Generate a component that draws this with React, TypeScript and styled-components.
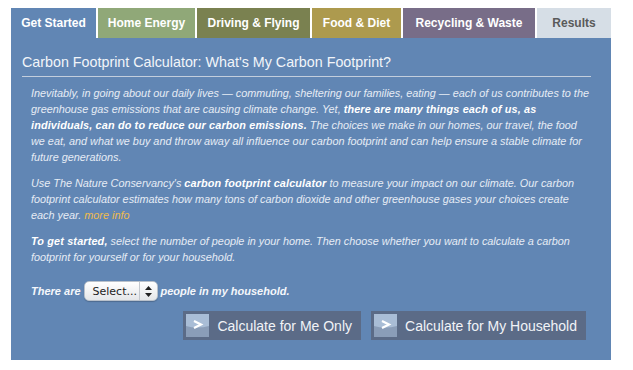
import styled, { createGlobalStyle } from 'styled-components';

const GlobalStyle = createGlobalStyle`
  body {
    margin: 0;
    background: #ffffff;
    font-family: 'Liberation Sans', Arial, sans-serif;
  }
`;

const tabs = [
  { label: 'Get Started', bg: '#6186b4', color: '#ffffff', width: 85 },
  { label: 'Home Energy', bg: '#90a878', color: '#ffffff', width: 97 },
  { label: 'Driving & Flying', bg: '#7a8150', color: '#ffffff', width: 113 },
  { label: 'Food & Diet', bg: '#ad9a4e', color: '#ffffff', width: 89 },
  { label: 'Recycling & Waste', bg: '#786d88', color: '#ffffff', width: 132 },
  { label: 'Results', bg: '#d6dee6', color: '#5a5a5a', width: 0 },
];

const ArrowIcon = () => (
  <IconBox>
    <svg width="23" height="23" viewBox="0 0 23 23">
      <rect x="0" y="0" width="23" height="23" fill="#a9bdd6" />
      <path d="M0 12 Q11 15 23 12 L23 23 L0 23 Z" fill="#8a9db8" />
      <path d="M8 7 L15 10.5 L8 14" stroke="#ffffff" strokeWidth="2.2" fill="none" />
    </svg>
  </IconBox>
);

const App = () => {
  return (
    <Page>
      <GlobalStyle />
      <TabBar>
        {tabs.map((tab) => (
          <Tab key={tab.label} $bg={tab.bg} $color={tab.color} $width={tab.width}>
            {tab.label}
          </Tab>
        ))}
      </TabBar>
      <Panel>
        <Title>Carbon Footprint Calculator: What's My Carbon Footprint?</Title>
        <Body>
          <Paragraph>
            Inevitably, in going about our daily lives — commuting, sheltering our families, eating — each of us
            contributes to the greenhouse gas emissions that are causing climate change. Yet,{' '}
            <strong>there are many things each of us, as individuals, can do to reduce our carbon emissions.</strong>{' '}
            The choices we make in our homes, our travel, the food we eat, and what we buy and throw away all influence
            our carbon footprint and can help ensure a stable climate for future generations.
          </Paragraph>
          <Paragraph>
            Use The Nature Conservancy's <strong>carbon footprint calculator</strong> to measure your impact on our
            climate. Our carbon footprint calculator estimates how many tons of carbon dioxide and other greenhouse
            gases your choices create each year. <MoreLink href="#">more info</MoreLink>
          </Paragraph>
          <Paragraph>
            <strong>To get started,</strong> select the number of people in your home. Then choose whether you want to
            calculate a carbon footprint for yourself or for your household.
          </Paragraph>
          <HouseholdRow>
            <span>There are</span>
            <SelectBox>
              <SelectText>Select...</SelectText>
              <SelectArrows>
                <svg width="7" height="11" viewBox="0 0 7 11">
                  <path d="M3.5 0 L7 4 L0 4 Z" fill="#222" />
                  <path d="M3.5 11 L7 7 L0 7 Z" fill="#222" />
                </svg>
              </SelectArrows>
            </SelectBox>
            <span>people in my household.</span>
          </HouseholdRow>
          <Actions>
            <ActionButton>
              <ArrowIcon />
              Calculate for Me Only
            </ActionButton>
            <ActionButton>
              <ArrowIcon />
              Calculate for My Household
            </ActionButton>
          </Actions>
        </Body>
      </Panel>
    </Page>
  );
};

const Page = styled.div`
  width: 600px;
  padding: 8px 0 0 11px;
`;

const TabBar = styled.div`
  display: flex;
  gap: 2px;
  height: 30px;
`;

const Tab = styled.div<{ $bg: string; $color: string; $width: number }>`
  display: flex;
  align-items: center;
  justify-content: center;
  flex: ${({ $width }) => ($width ? `0 0 ${$width}px` : '1 1 auto')};

  background: ${({ $bg }) => $bg};
  color: ${({ $color }) => $color};
  font-size: 12px;
  font-weight: 700;
  white-space: nowrap;
`;

const Panel = styled.div`
  height: 322px;
  padding: 16px 20px 0 11px;
  box-sizing: border-box;

  background: #6186b4;
`;

const Title = styled.h1`
  margin: 0;
  padding-bottom: 6px;
  border-bottom: 1px solid #c3cedd;

  color: #f2f5f9;
  font-size: 14.3px;
  font-weight: 400;
  line-height: 16px;
`;

const Body = styled.div`
  display: flex;
  flex-direction: column;
  padding: 8px 0 0 9px;
`;

const Paragraph = styled.p`
  margin: 0 0 10px;

  color: #e6ecf4;
  font-size: 10.85px;
  font-style: italic;
  line-height: 16px;

  strong {
    color: #ffffff;
    font-weight: 700;
    letter-spacing: 0.15px;
  }
`;

const MoreLink = styled.a`
  color: #f0bb4c;
  text-decoration: none;
`;

const HouseholdRow = styled.div`
  display: flex;
  align-items: center;
  gap: 3px;
  margin-top: 6px;

  color: #f4f7fb;
  font-size: 11px;
  font-style: italic;
  font-weight: 700;
`;

const SelectBox = styled.div`
  display: flex;
  align-items: center;
  width: 74px;
  height: 20px;
  box-sizing: border-box;

  border: 1px solid #b9c1cb;
  border-radius: 5px;
  background: linear-gradient(#ffffff, #e4e6e9);
  box-shadow: 0 1px 1px rgba(0, 0, 0, 0.2);
`;

const SelectText = styled.span`
  flex: 1;
  padding-left: 8px;

  color: #222222;
  font-family: 'DejaVu Sans', sans-serif;
  font-size: 11px;
  font-style: normal;
  font-weight: 400;
`;

const SelectArrows = styled.span`
  display: flex;
  align-items: center;
  justify-content: center;
  width: 17px;
  height: 100%;

  border-left: 1px solid #c4c8ce;
`;

const Actions = styled.div`
  display: flex;
  justify-content: flex-end;
  gap: 10px;
  margin-top: 10px;
  padding-right: 5px;
`;

const ActionButton = styled.button`
  display: flex;
  align-items: center;
  gap: 8px;
  height: 29px;
  padding: 0 9px 0 3px;

  border: none;
  background: #5b6b87;
  color: #f1f3f7;
  font-family: 'Liberation Sans', Arial, sans-serif;
  font-size: 14px;
  cursor: pointer;
`;

const IconBox = styled.span`
  display: flex;
  width: 23px;
  height: 23px;
`;

export default App;
